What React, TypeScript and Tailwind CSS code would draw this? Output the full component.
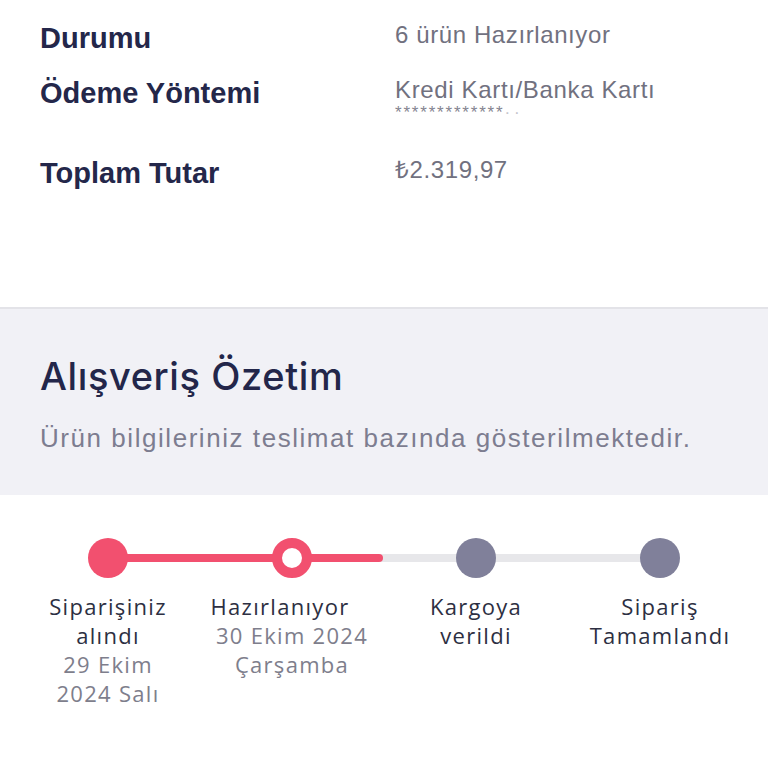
export default function App() {
  const steps = [
    { title: ["Siparişiniz", "alındı"], date: ["29 Ekim", "2024 Salı"], shift: "" },
    { title: ["Hazırlanıyor"], date: ["30 Ekim 2024", "Çarşamba"], shift: "hz" },
    { title: ["Kargoya", "verildi"], date: [], shift: "" },
    { title: ["Sipariş", "Tamamlandı"], date: [], shift: "" },
  ];
  return (
    <div className="w-[768px] h-[768px] bg-white overflow-hidden">
      {/* Order info */}
      <div className="h-[307px] pl-[40px] pt-[21px] font-['Liberation_Sans',Arial,sans-serif]">
        <div className="flex h-[55px]">
          <div className="w-[355px] text-[29px] leading-[34px] font-bold text-[#24274a]">Durumu</div>
          <div className="text-[24px] leading-[28px] tracking-[0.6px] text-[#71717f]">6 ürün Hazırlanıyor</div>
        </div>
        <div className="flex h-[80px]">
          <div className="w-[355px] text-[29px] leading-[34px] font-bold text-[#24274a]">Ödeme Yöntemi</div>
          <div className="flex flex-col">
            <div className="text-[24px] leading-[28px] tracking-[0.65px] text-[#71717f]">Kredi Kartı/Banka Kartı</div>
            <div className="flex items-center h-[18px] text-[17px] leading-[18px] tracking-[1.8px] text-[#858591]">
              <span>*************</span>
              <span className="text-[#c4c4cc] tracking-[4px]">··</span>
            </div>
          </div>
        </div>
        <div className="flex">
          <div className="w-[355px] text-[29px] leading-[34px] font-bold text-[#24274a]">Toplam Tutar</div>
          <div className="text-[24px] leading-[28px] tracking-[0.6px] text-[#71717f]">₺2.319,97</div>
        </div>
      </div>

      {/* Summary header */}
      <div className="border-t-2 border-[#e3e3e8] bg-[#f1f1f6] h-[188px] pl-[40px] pt-[45px]">
        <div className="font-['Inter',sans-serif] font-medium text-[38px] leading-[44px] tracking-[0.6px] text-[#23264a]">Alışveriş Özetim</div>
        <div className="mt-[25px] font-['Liberation_Sans',Arial,sans-serif] text-[26px] leading-[30px] tracking-[1.55px] text-[#7d7d90]">
          Ürün bilgileriniz teslimat bazında gösterilmektedir.
        </div>
      </div>

      {/* Stepper */}
      <div className="px-[16px] pt-[43px] font-['Open_Sans',sans-serif]">
        <div className="relative grid grid-cols-4 h-[40px]">
          <div className="absolute left-[92px] right-[92px] top-[16px] h-[8px] rounded-full bg-[#e7e7ea]" />
          <div className="absolute left-[92px] w-[275px] top-[16px] h-[8px] rounded-full bg-[#f2506f]" />
          <div className="relative flex justify-center">
            <div className="w-[40px] h-[40px] rounded-full bg-[#f2506f]" />
          </div>
          <div className="relative flex justify-center">
            <div className="w-[40px] h-[40px] rounded-full border-[10px] border-[#f2506f] bg-white" />
          </div>
          <div className="relative flex justify-center">
            <div className="w-[40px] h-[40px] rounded-full bg-[#80809a]" />
          </div>
          <div className="relative flex justify-center">
            <div className="w-[40px] h-[40px] rounded-full bg-[#80809a]" />
          </div>
        </div>
        <div className="grid grid-cols-4 mt-[14px]">
          {steps.map((s, i) => (
            <div key={i} className={"flex flex-col items-center text-center text-[22px] leading-[29px] tracking-[1.3px] " + (s.shift ? "pr-[24px]" : "")}>
              {s.title.map((t) => (
                <div key={t} className="text-[#2d2f42] whitespace-nowrap">{t}</div>
              ))}
              {s.date.map((t) => (
                <div key={t} className={"text-[#7e7e8c] whitespace-nowrap " + (s.shift ? "ml-[24px]" : "")}>{t}</div>
              ))}
            </div>
          ))}
        </div>
      </div>
    </div>
  );
}
